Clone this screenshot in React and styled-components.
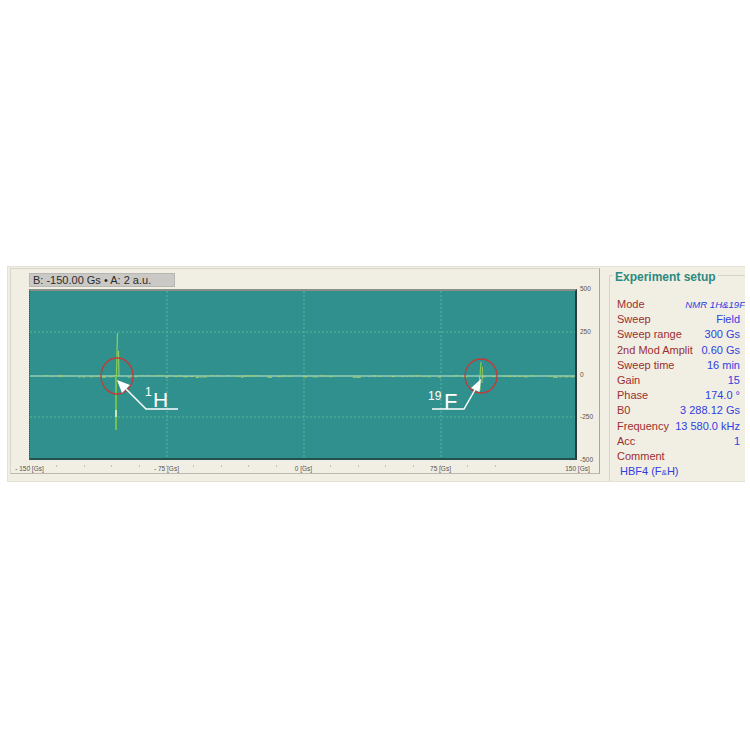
import React from "react";
import styled, { createGlobalStyle } from "styled-components";

const Global = createGlobalStyle`
  html, body { margin: 0; padding: 0; background: #ffffff; }
  body { font-family: "Liberation Sans", Arial, sans-serif; }
`;

const Page = styled.div`
  padding: 266px 0 0 7px;
  width: 750px;
  height: 750px;
  box-sizing: border-box;
`;

const Window = styled.div`
  width: 738px;
  height: 216px;
  box-sizing: border-box;
  background: #f1eee4;
  border-top: 1px solid #e4e1d6;
  border-left: 1px solid #e4e1d6;
  border-bottom: 1px solid #e4e1d6;
  display: flex;
  align-items: flex-start;
  overflow: hidden;
`;

const ChartFrame = styled.div`
  margin: 1px 0 0 2px;
  width: 590px;
  height: 206px;
  box-sizing: border-box;
  border-top: 1px solid #d9d6cc;
  border-left: 1px solid #d9d6cc;
  border-right: 1px solid #a9a69e;
  border-bottom: 1px solid #bcb9b0;
  padding: 4px 0 0 18px;
  display: flex;
  flex-direction: column;
`;

const TitleBar = styled.div`
  width: 146px;
  height: 14px;
  box-sizing: border-box;
  background: #cbc9c5;
  border: 1px solid #b9b7b2;
  color: #2b2b2b;
  font-size: 11px;
  line-height: 12px;
  padding-left: 3px;
  white-space: nowrap;
  margin-bottom: 2px;
`;

const PlotRow = styled.div`
  display: flex;
  align-items: flex-start;
`;

const Plot = styled.div`
  width: 548px;
  height: 171px;
  box-sizing: border-box;
  background: #2f908e;
  border-top: 2px solid #8c8c88;
  border-bottom: 2px solid #24514f;
  border-right: 2px solid #2c3c3c;
  border-left: 1px dotted #5a3d6e;
  overflow: hidden;
  svg { display: block; }
`;

const YAxis = styled.div`
  height: 181px;
  margin-top: -5px;
  padding-left: 3px;
  display: flex;
  flex-direction: column;
  justify-content: space-between;
`;

const TinyLabel = styled.span`
  font-size: 6.5px;
  line-height: 10px;
  color: #555550;
  white-space: nowrap;
`;

const XAxis = styled.div`
  width: 548px;
  height: 13px;
  display: flex;
  margin-left: -68px;
  background-image: repeating-linear-gradient(
    to right,
    #c4c1b8 0px,
    #c4c1b8 1px,
    transparent 1px,
    transparent 27.4px
  );
  background-size: 548px 2px;
  background-repeat: no-repeat;
  background-position: 68px 0;
`;

const XLabel = styled.div`
  flex: 0 0 137px;
  text-align: center;
  font-size: 6.5px;
  line-height: 8px;
  padding-top: 0;
  color: #555550;
  white-space: nowrap;
`;

const GroupBox = styled.div`
  margin: 8px 0 0 9px;
  flex: 1;
  height: 220px;
  box-sizing: border-box;
  border-top: 1px solid #d6d3c9;
  border-left: 1px solid #d6d3c9;
  padding: 0 5px 0 7px;
`;

const GroupTitle = styled.div`
  display: block;
  width: fit-content;
  margin: -6px 0 0 -4px;
  background: #f1eee4;
  padding: 0 2px 0 2px;
  color: #2b8a80;
  font-size: 12px;
  font-weight: bold;
  line-height: 14px;
`;

const Rows = styled.div`
  margin-top: 13px;
  display: flex;
  flex-direction: column;
`;

const Row = styled.div`
  display: flex;
  justify-content: space-between;
  align-items: baseline;
  height: 15.2px;
  line-height: 15.2px;
  font-size: 11px;
  white-space: nowrap;
`;

const Label = styled.span`
  color: #9c2f2f;
`;

const Value = styled.span`
  color: #3040e0;
  font-style: ${(p) => (p.$italic ? "italic" : "normal")};
  font-size: ${(p) => (p.$italic ? "9.6px" : "11px")};
  margin-right: ${(p) => (p.$italic ? "-5px" : "0")};
`;

const CommentText = styled.span`
  color: #3040e0;
  padding-left: 3px;
  small { font-size: 8px; }
`;

const rows = [
  ["Mode", "NMR 1H&19F", true],
  ["Sweep", "Field"],
  ["Sweep range", "300 Gs"],
  ["2nd Mod Amplit", "0.60 Gs"],
  ["Sweep time", "16 min"],
  ["Gain", "15"],
  ["Phase", "174.0 °"],
  ["B0", "3 288.12 Gs"],
  ["Frequency", "13 580.0 kHz"],
  ["Acc", "1"],
];

function rand(seed) {
  let s = seed;
  return () => {
    s = (s * 9301 + 49297) % 233280;
    return s / 233280;
  };
}

function Noise() {
  const r = rand(7);
  const segs = [];
  let x = 0;
  while (x < 546) {
    const w = 1 + r() * 4;
    const dy = (r() - 0.5) * 1.6;
    if (r() > 0.35) {
      segs.push(
        <line
          key={x}
          x1={x}
          x2={x + w}
          y1={85.5 + dy}
          y2={85.5 + dy}
          stroke={r() > 0.5 ? "#b8d35c" : "#a4cc70"}
          strokeWidth="1"
        />
      );
    }
    x += w + r() * 3;
  }
  return <g>{segs}</g>;
}

function Spectrum() {
  const grid = "#56b99a";
  return (
    <svg width="545" height="167" viewBox="0 0 545 167">
      {[137, 274, 411].map((x) => (
        <line key={x} x1={x} x2={x} y1="0" y2="167" stroke={grid} strokeWidth="1" strokeDasharray="2 2" />
      ))}
      {[41, 126].map((y) => (
        <line key={y} x1="0" x2="545" y1={y} y2={y} stroke={grid} strokeWidth="1" strokeDasharray="2 2" />
      ))}
      <line x1="0" x2="545" y1="85" y2="85" stroke="#93cdb5" strokeWidth="1.6" />
      <Noise />
      {/* 1H signal */}
      <line x1="86.5" y1="85" x2="87.5" y2="42" stroke="#86cf52" strokeWidth="1.3" />
      <line x1="88.5" y1="60" x2="89" y2="85" stroke="#9ed668" strokeWidth="1" />
      <line x1="86" y1="85" x2="86" y2="139" stroke="#72c050" strokeWidth="2" />
      <line x1="86" y1="119" x2="86" y2="126" stroke="#f4f4f0" strokeWidth="1.4" />
      {/* 19F signal */}
      <line x1="450" y1="85" x2="451" y2="71" stroke="#86cf52" strokeWidth="1.2" />
      <line x1="449.5" y1="85" x2="450" y2="99" stroke="#9ed668" strokeWidth="1.2" />
      <line x1="452.5" y1="76" x2="452" y2="92" stroke="#b8d35c" strokeWidth="0.8" />
      {/* circles */}
      <ellipse cx="87" cy="85" rx="16" ry="18" fill="none" stroke="#c43a36" strokeWidth="1.3" />
      <ellipse cx="451" cy="85" rx="16" ry="17" fill="none" stroke="#c43a36" strokeWidth="1.3" />
      {/* 1H annotation */}
      <polyline points="96,98 116,118 148,118" fill="none" stroke="#ffffff" strokeWidth="1.5" />
      <polygon points="87,89 100,94 92,102" fill="#ffffff" />
      <text x="115" y="105" fill="#ffffff" fontSize="12" fontFamily="Liberation Sans, Arial, sans-serif">1</text>
      <text x="123" y="116" fill="#ffffff" fontSize="21" fontFamily="Liberation Sans, Arial, sans-serif">H</text>
      {/* 19F annotation */}
      <polyline points="402,118 434,118 446,97" fill="none" stroke="#ffffff" strokeWidth="1.5" />
      <polygon points="451,88 449.5,101 441,97" fill="#ffffff" />
      <text x="398" y="109" fill="#ffffff" fontSize="12" fontFamily="Liberation Sans, Arial, sans-serif">19</text>
      <text x="414" y="118" fill="#ffffff" fontSize="22" fontFamily="Liberation Sans, Arial, sans-serif">F</text>
    </svg>
  );
}

export default function App() {
  return (
    <>
      <Global />
      <Page>
        <Window>
          <ChartFrame>
            <TitleBar>B: -150.00 Gs • A: 2 a.u.</TitleBar>
            <PlotRow>
              <Plot>
                <Spectrum />
              </Plot>
              <YAxis>
                <TinyLabel>500</TinyLabel>
                <TinyLabel>250</TinyLabel>
                <TinyLabel>0</TinyLabel>
                <TinyLabel>-250</TinyLabel>
                <TinyLabel>-500</TinyLabel>
              </YAxis>
            </PlotRow>
            <XAxis>
              <XLabel>- 150 [Gs]</XLabel>
              <XLabel>- 75 [Gs]</XLabel>
              <XLabel>0 [Gs]</XLabel>
              <XLabel>75 [Gs]</XLabel>
              <XLabel>150 [Gs]</XLabel>
            </XAxis>
          </ChartFrame>
          <GroupBox>
            <GroupTitle>Experiment setup</GroupTitle>
            <Rows>
              {rows.map(([l, v, it]) => (
                <Row key={l}>
                  <Label>{l}</Label>
                  <Value $italic={it}>{v}</Value>
                </Row>
              ))}
              <Row>
                <Label>Comment</Label>
              </Row>
              <Row>
                <CommentText>
                  HBF4 (F<small>&amp;</small>H)
                </CommentText>
              </Row>
            </Rows>
          </GroupBox>
        </Window>
      </Page>
    </>
  );
}
